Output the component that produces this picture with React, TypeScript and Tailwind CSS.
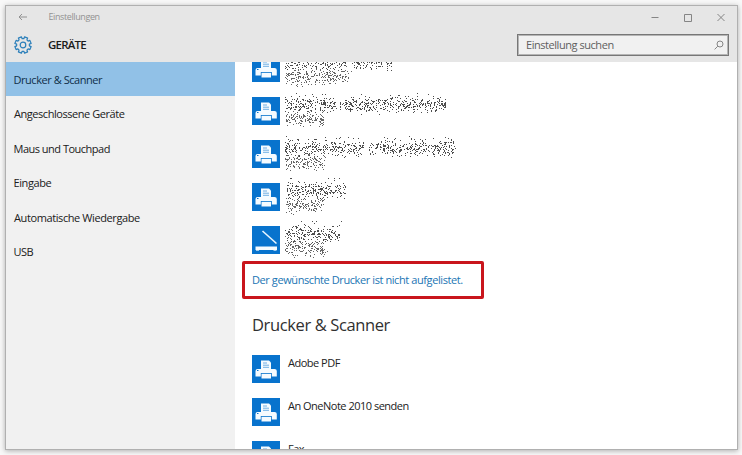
import type { ReactNode } from 'react';

const navItems = [
  { label: 'Drucker & Scanner', className: 'pl-[7.5px] tracking-[-0.45px]', active: true },
  { label: 'Angeschlossene Geräte', className: 'pl-2 tracking-[-0.45px]' },
  { label: 'Maus und Touchpad', className: 'pl-[7.5px] tracking-[-0.5px]' },
  { label: 'Eingabe', className: 'pl-[7.5px] tracking-[-0.4px]' },
  { label: 'Automatische Wiedergabe', className: 'pl-2 tracking-[-0.4px]' },
  { label: 'USB', className: 'pl-[7.5px] tracking-[-0.5px]' },
];

// word ranges [start, end] of the two scrambled lines in each row
const hiddenDevices = [
  { icon: 'printer', name: [[1, 33], [33, 62], [68, 108]], status: [[1, 29], [29, 65]] },
  { icon: 'printer', name: [[1, 34], [35, 53], [56, 98], [98, 134], [135, 162]], status: [[2, 40]] },
  { icon: 'printer', name: [[1, 38], [39, 80], [85, 114], [115, 172]], status: [[1, 41]] },
  { icon: 'printer', name: [[1, 31], [31, 62]], status: [[2, 40]] },
  { icon: 'scanner', name: [[1, 28], [28, 56]], status: [[1, 45]] },
];

const devices = ['Adobe PDF', 'An OneNote 2010 senden', 'Fax'];

function speckle(words: number[][], center: number, seed: number) {
  let s = seed;
  const rand = () => {
    s = (s * 1664525 + 1013904223) % 4294967296;
    return s / 4294967296;
  };
  let d = '';
  words.forEach(([from, to]) => {
    const count = Math.round((to - from) * 3.6);
    for (let i = 0; i < count; i++) {
      const x = Math.floor(from + rand() * (to - from));
      const spread = (rand() + rand() + rand() - 1.5) * 7.5;
      const y = Math.round(center + spread);
      d += `M${x} ${y}h1v1h-1z`;
    }
    // stray pixels above the line
    for (let i = 0; i < (to - from) / 7; i++) {
      d += `M${Math.floor(from + rand() * (to - from + 4))} ${Math.round(center - 4 - rand() * 9)}h1v1h-1z`;
    }
  });
  return d;
}

function ScrambledText({ name, status, seed }: { name: number[][]; status: number[][]; seed: number }) {
  return (
    <svg width="180" height="43" viewBox="0 0 180 43" className="-mt-2 ml-1 shrink-0" shapeRendering="crispEdges">
      <path d={speckle(name, 15.5, seed * 917)} fill="#222" fillOpacity="0.8" />
      <path d={speckle(status, 30, seed * 3571)} fill="#333" fillOpacity="0.75" />
    </svg>
  );
}

function PrinterIcon() {
  return (
    <svg width="28" height="28" viewBox="0 0 28 28" className="shrink-0 bg-[#0873cd]">
      <path d="M9 5.5h8l2 2V14H9z" fill="#f5fbff" />
      <path d="M11 8h4M11 10.2h6M11 12.3h6" stroke="#4b9bdc" strokeWidth="0.8" />
      <path d="M5.5 14h17q2.3 0 2.3 2v5.500h-5V18h-11v3.5H3.5V16q0-2 2-2z" fill="#f5fbff" />
      <path d="M9.5 18.8h9.5v4.7H9.5z" fill="#f5fbff" />
      <path d="M5 15.5h1.5" stroke="#0873cd" strokeWidth="1" />
    </svg>
  );
}

function ScannerIcon() {
  return (
    <svg width="28" height="28" viewBox="0 0 28 28" className="shrink-0 bg-[#0873cd]">
      <path d="M10.5 5L24.5 17.5" stroke="#e9f6ff" strokeWidth="1.6" />
      <path d="M3.5 20.5h21.5v3.5H3.5z" fill="#f5fbff" />
      <path d="M4 24.5h3M21.5 24.5h3" stroke="#9bcbef" strokeWidth="1" />
    </svg>
  );
}

function GearIcon() {
  const teeth = [];
  for (let i = 0; i < 8; i++) {
    const a = (i * Math.PI) / 4 + Math.PI / 8;
    const point = (r: number, off: number) =>
      `${(9 + r * Math.sin(a + off)).toFixed(2)} ${(9 - r * Math.cos(a + off)).toFixed(2)}`;
    teeth.push(point(6.4, -0.26), point(8.3, -0.2), point(8.3, 0.2), point(6.4, 0.26));
  }
  return (
    <svg width="18" height="18" viewBox="0 0 18 18" fill="none" stroke="#2b7fba" strokeWidth="1.2" strokeLinejoin="round">
      <path d={`M${teeth.join('L')}Z`} />
      <circle cx="9" cy="9" r="2.8" />
    </svg>
  );
}

function TitleBar() {
  return (
    <div className="flex h-[21px] items-center text-[#929292]">
      <svg width="9" height="8" viewBox="0 0 9 8" className="ml-3 shrink-0" fill="none" stroke="#929292" strokeWidth="1">
        <path d="M4 1L1 4l3 3M1 4h8" />
      </svg>
      <span className="ml-[21.5px] text-[9px] leading-none tracking-[-0.4px]">Einstellungen</span>
      <svg width="75" height="10" viewBox="0 0 75 10" className="mr-[12px] ml-auto" fill="none" stroke="#858585" strokeWidth="1">
        <path d="M1.5 5.5h7" />
        <path d="M34.5 2.5h7v7h-7z" />
        <path d="M67.5 2l7 7M74.5 2l-7 7" />
      </svg>
    </div>
  );
}

function Header() {
  return (
    <div className="flex h-[35px] items-center">
      <div className="ml-2">
        <GearIcon />
      </div>
      <h1 className="ml-[16px] text-[11.5px] leading-none font-semibold tracking-[-0.8px] text-[#1b1b1b]">GERÄTE</h1>
      <div className="mr-2 ml-auto flex h-[22px] w-[212px] items-center border border-[#777] bg-[#f1f1f1] pr-1 pl-2 shadow-[inset_0_0_0_1px_#b5b5b5]">
        <span className="text-[11px] leading-none tracking-[-0.45px] text-[#606060]">Einstellung suchen</span>
        <svg width="10" height="10" viewBox="0 0 10 10" className="ml-auto" fill="none" stroke="#858585" strokeWidth="1">
          <circle cx="6" cy="4" r="3" />
          <path d="M3.8 6.2L.6 9.4" />
        </svg>
      </div>
    </div>
  );
}

function DeviceRow({ icon, children }: { icon: string; children: ReactNode }) {
  return (
    <li className="flex h-[43px] shrink-0 items-start">
      {icon === 'scanner' ? <ScannerIcon /> : <PrinterIcon />}
      {children}
    </li>
  );
}

export default function App() {
  return (
    <div className="h-[455px] w-[742px] overflow-hidden bg-[#f8f8f8] pt-[5px] pl-[5px] font-['Open_Sans','Noto_Sans',sans-serif]">
      <div className="flex h-[445px] w-[733px] flex-col border border-[#b0b0b0] bg-white shadow-[0_1px_5px_rgba(0,0,0,0.3)]">
        <header className="h-[56px] shrink-0 bg-[#e6e6e6]">
          <TitleBar />
          <Header />
        </header>
        <div className="flex min-h-0 flex-1">
          <nav className="w-[229px] shrink-0 bg-[#f1f1f1]">
            {navItems.map((item) => (
              <div
                key={item.label}
                className={`flex h-[34.4px] items-center pt-[2px] text-[11px] whitespace-nowrap ${item.className} ${
                  item.active ? 'bg-[#91c1e7] text-[#102f49]' : 'text-[#202020]'
                }`}
              >
                {item.label}
              </div>
            ))}
          </nav>
          <main className="flex min-w-0 flex-1 flex-col overflow-hidden">
            <ul className="-mt-2 ml-[17px] shrink-0">
              {hiddenDevices.map((device, i) => (
                <DeviceRow key={i} icon={device.icon}>
                  <ScrambledText name={device.name} status={device.status} seed={i + 3} />
                </DeviceRow>
              ))}
            </ul>
            <div className="-mt-2 ml-[7px] flex h-[38px] w-[242px] shrink-0 items-center rounded-[2px] border-3 border-[#c9151c] pb-px pl-[7px]">
              <a className="text-[11px] leading-none tracking-[-0.41px] whitespace-nowrap text-[#2175b4]">
                Der gewünschte Drucker ist nicht aufgelistet.
              </a>
            </div>
            <h2 className="mt-[14px] ml-[17px] h-6 shrink-0 text-[16.5px] leading-6 tracking-[-0.38px] text-[#303030]">Drucker & Scanner</h2>
            <ul className="mt-[18px] ml-[17px] shrink-0">
              {devices.map((name) => (
                <DeviceRow key={name} icon="printer">
                  <span className="ml-2 text-[11px] leading-4 tracking-[-0.5px] text-[#222]">{name}</span>
                </DeviceRow>
              ))}
            </ul>
          </main>
        </div>
      </div>
    </div>
  );
}
